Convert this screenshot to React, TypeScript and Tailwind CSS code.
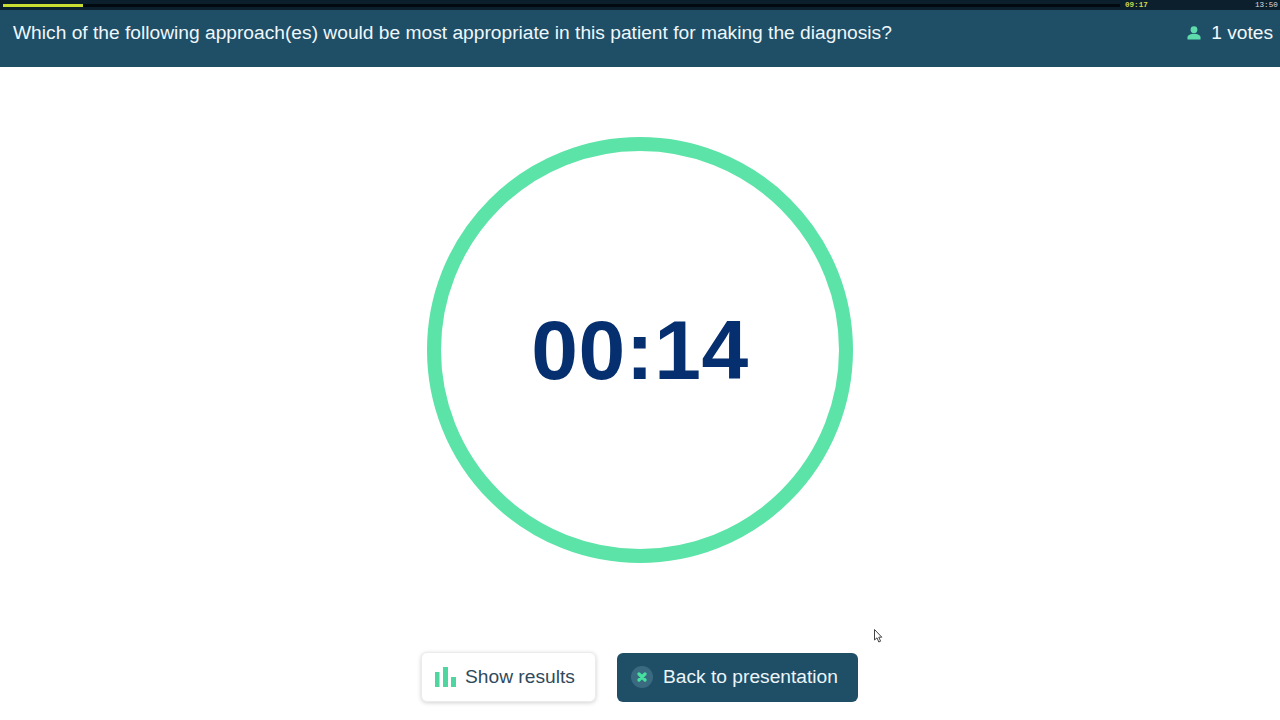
export default function App() {
  return (
    <div className="w-[1280px] h-[720px] bg-white flex flex-col relative overflow-hidden font-['Liberation_Sans',Arial,sans-serif]">
      <div className="h-[10px] bg-[#0b1f2c] flex items-center relative shrink-0">
        <div className="flex-1 flex items-center pl-[3px] pr-[160px]">
          <div className="h-[3px] bg-[#020a10] flex-1">
            <div className="h-[3px] w-[80px] bg-[#c8dc32]" />
          </div>
        </div>
        <span className="absolute left-[1125px] top-[0px] text-[7.6px] leading-[10px] font-bold text-[#d4d84a] font-['Liberation_Mono',monospace]">09:17</span>
        <span className="absolute left-[1255px] top-[0px] text-[7.6px] leading-[10px] text-[#d8dde0] font-['Liberation_Mono',monospace]">13:50</span>
      </div>
      <div className="h-[57px] bg-[#1f4e67] flex items-start justify-between pl-[13px] pr-[7px] pt-[11px] shrink-0">
        <span className="text-[19.2px] leading-[23px] text-[#eef7fb]">Which of the following approach(es) would be most appropriate in this patient for making the diagnosis?</span>
        <div className="flex items-center text-[19.2px] leading-[23px] text-[#f3f8fa]">
          <svg width="14" height="14" viewBox="0 0 14 14" className="mr-[10px]" fill="#5fdcab">
            <circle cx="7" cy="3.7" r="3.4" />
            <path d="M0.5 13.5v-2.2c0-2.4 3.4-3.6 6.5-3.6s6.5 1.2 6.5 3.6v2.2z" />
          </svg>
          <span>1 votes</span>
        </div>
      </div>
      <div className="flex-1 flex items-start justify-center pt-[70px]">
        <div className="w-[426px] h-[426px] rounded-full border-[14px] border-[#5ce3a8] flex items-center justify-center">
          <span className="text-[84px] font-bold leading-none text-[#052f6e] tracking-[0.5px]">00:14</span>
        </div>
      </div>
      <div className="flex justify-center items-center gap-[21px] pb-[18px] pr-[1px] shrink-0">
        <button className="w-[175px] h-[50px] rounded-[6px] bg-white border border-[#ececec] shadow-[0_1px_4px_rgba(0,0,0,0.18)] flex items-center pl-[13px] text-[19.2px] text-[#2f4a5c]">
          <svg width="21" height="20" viewBox="0 0 21 20" fill="#4fd6a0" className="mr-[9px]">
            <rect x="0" y="5" width="4.5" height="15" />
            <rect x="8" y="0" width="5" height="20" />
            <rect x="16" y="10" width="5" height="10" />
          </svg>
          Show results
        </button>
        <button className="w-[241px] h-[49px] rounded-[6px] bg-[#1f4e67] flex items-center pl-[14px] text-[19.2px] text-[#eaf6fa]">
          <span className="w-[22px] h-[22px] rounded-full bg-[#3a6a80] flex items-center justify-center mr-[10px]">
            <svg width="10" height="10" viewBox="0 0 10 10" stroke="#45e0a0" strokeWidth="3.2" strokeLinecap="round">
              <path d="M2 2l6 6M8 2l-6 6" />
            </svg>
          </span>
          Back to presentation
        </button>
      </div>
      <svg className="absolute left-[874px] top-[629px]" width="9" height="14" viewBox="0 0 9 14" fill="white" stroke="#444" strokeWidth="1">
        <path d="M0.5 0.5v10.5l2.5-2.2 1.8 4.2 1.8-.8-1.8-4h3z" />
      </svg>
    </div>
  );
}
